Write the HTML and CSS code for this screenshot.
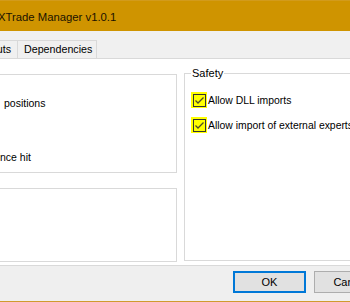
FILE: index.html
```html
<!DOCTYPE html>
<html>
<head>
<meta charset="utf-8">
<link rel="stylesheet" href="styles.css">
</head>
<body>
<div class="window">
  <div class="titlebar"><span class="title">XTrade Manager v1.0.1</span></div>
  <div class="tabstrip">
    <div class="tab tab-inputs">Inputs</div>
    <div class="tab tab-deps">Dependencies</div>
  </div>
  <div class="content">
    <div class="left-col">
      <div class="box box-top">
        <div class="row row-positions">positions</div>
        <div class="row row-hit">nce hit</div>
      </div>
      <div class="box box-bottom"></div>
    </div>
    <fieldset class="group">
      <legend class="legend">Safety</legend>
      <label class="check">
        <span class="cb"><svg width="13" height="13" viewBox="0 0 13 13"><rect x="0.5" y="0.5" width="12" height="12" fill="none" stroke="#333" stroke-width="1"/><path d="M2.5 6.5 L5 9 L10.5 3.5" fill="none" stroke="#4a4a2a" stroke-width="1.3"/></svg></span>
        <span class="ctext">Allow DLL imports</span>
      </label>
      <label class="check">
        <span class="cb"><svg width="13" height="13" viewBox="0 0 13 13"><rect x="0.5" y="0.5" width="12" height="12" fill="none" stroke="#333" stroke-width="1"/><path d="M2.5 6.5 L5 9 L10.5 3.5" fill="none" stroke="#4a4a2a" stroke-width="1.3"/></svg></span>
        <span class="ctext">Allow import of external experts</span>
      </label>
    </fieldset>
  </div>
  <div class="buttons">
    <button class="btn btn-ok">OK</button>
    <button class="btn btn-cancel">Cancel</button>
  </div>
  <div class="goldline"></div>
</div>
</body>
</html>
```

FILE: styles.css
```css
html, body {
  margin: 0;
  padding: 0;
  background: #fff;
}
body {
  width: 350px;
  height: 302px;
  overflow: hidden;
  font-family: "Liberation Sans", Arial, sans-serif;
  color: #000;
}
.window {
  display: flex;
  flex-direction: column;
  width: 350px;
  height: 302px;
}
.titlebar {
  height: 31px;
  box-sizing: border-box;
  background: #cf9400;
  border-top: 1px solid #d29b1c;
  display: flex;
  align-items: center;
  overflow: hidden;
  white-space: nowrap;
}
.title {
  margin-left: -2px;
  font-size: 11.3px;
  color: #1a1200;
  padding-top: 1px;
}
.tabstrip {
  height: 28px;
  box-sizing: border-box;
  background: #f0f0f0;
  border-bottom: 1px solid #d9d9d9;
  display: flex;
  align-items: flex-end;
  overflow: hidden;
  white-space: nowrap;
}
.tab {
  height: 18px;
  box-sizing: border-box;
  border: 1px solid #d9d9d9;
  border-bottom: none;
  font-size: 10.7px;
  line-height: 17px;
  background: #f0f0f0;
}
.tab-inputs {
  margin-left: -25px;
  width: 43px;
  padding-left: 6px;
  box-sizing: border-box;
}
.tab-deps {
  width: 80px;
  padding-left: 6px;
  margin-left: -1px;
}
.content {
  flex: 1;
  display: flex;
  gap: 7px;
  padding-top: 15px;
  box-sizing: border-box;
  overflow: hidden;
}
.left-col {
  width: 177px;
  display: flex;
  flex-direction: column;
  gap: 15px;
  flex-shrink: 0;
}
.box {
  border: 1px solid #d9d9d9;
  border-left: none;
  box-sizing: border-box;
}
.box-top {
  height: 99px;
}
.box-bottom {
  height: 74px;
}
.row {
  font-size: 10.5px;
  line-height: 13px;
  white-space: nowrap;
}
.row-positions {
  padding-left: 4px;
  margin-top: 22px;
}
.row-hit {
  margin-top: 41px;
}
.group {
  flex: 1;
  margin: -7px -20px 0 0;
  padding: 0 0 0 6px;
  border: 1px solid #d9d9d9;
  height: 194px;
  box-sizing: border-box;
  min-width: 0;
}
.legend {
  font-size: 11px;
  line-height: 13px;
  padding: 0 1px;
  margin-left: 0;
}
.check {
  display: flex;
  align-items: center;
  height: 16px;
  white-space: nowrap;
  font-size: 10.4px;
}
.check:first-of-type {
  margin-top: 12px;
}
.check + .check {
  margin-top: 9px;
}
.cb {
  width: 16px;
  height: 16px;
  background: #ffff00;
  display: flex;
  align-items: center;
  justify-content: center;
  flex-shrink: 0;
}
.cb svg {
  display: block;
}
.ctext {
  margin-left: 1px;
}
.buttons {
  height: 36px;
  box-sizing: border-box;
  background: #efefef;
  border-top: 1px solid #d9d9d9;
  display: flex;
  align-items: flex-start;
  gap: 8px;
  padding: 5px 0 0 233px;
  overflow: hidden;
  white-space: nowrap;
}
.btn {
  height: 22px;
  box-sizing: border-box;
  background: #e1e1e1;
  font-family: "Liberation Sans", Arial, sans-serif;
  font-size: 11px;
  color: #000;
  padding: 0;
  margin: 0;
  flex-shrink: 0;
}
.btn-ok {
  width: 73px;
  border: 2px solid #0078d7;
}
.btn-cancel {
  width: 73px;
  border: 1px solid #adadad;
}
.goldline {
  height: 1px;
  background: #d09a2e;
}
```
